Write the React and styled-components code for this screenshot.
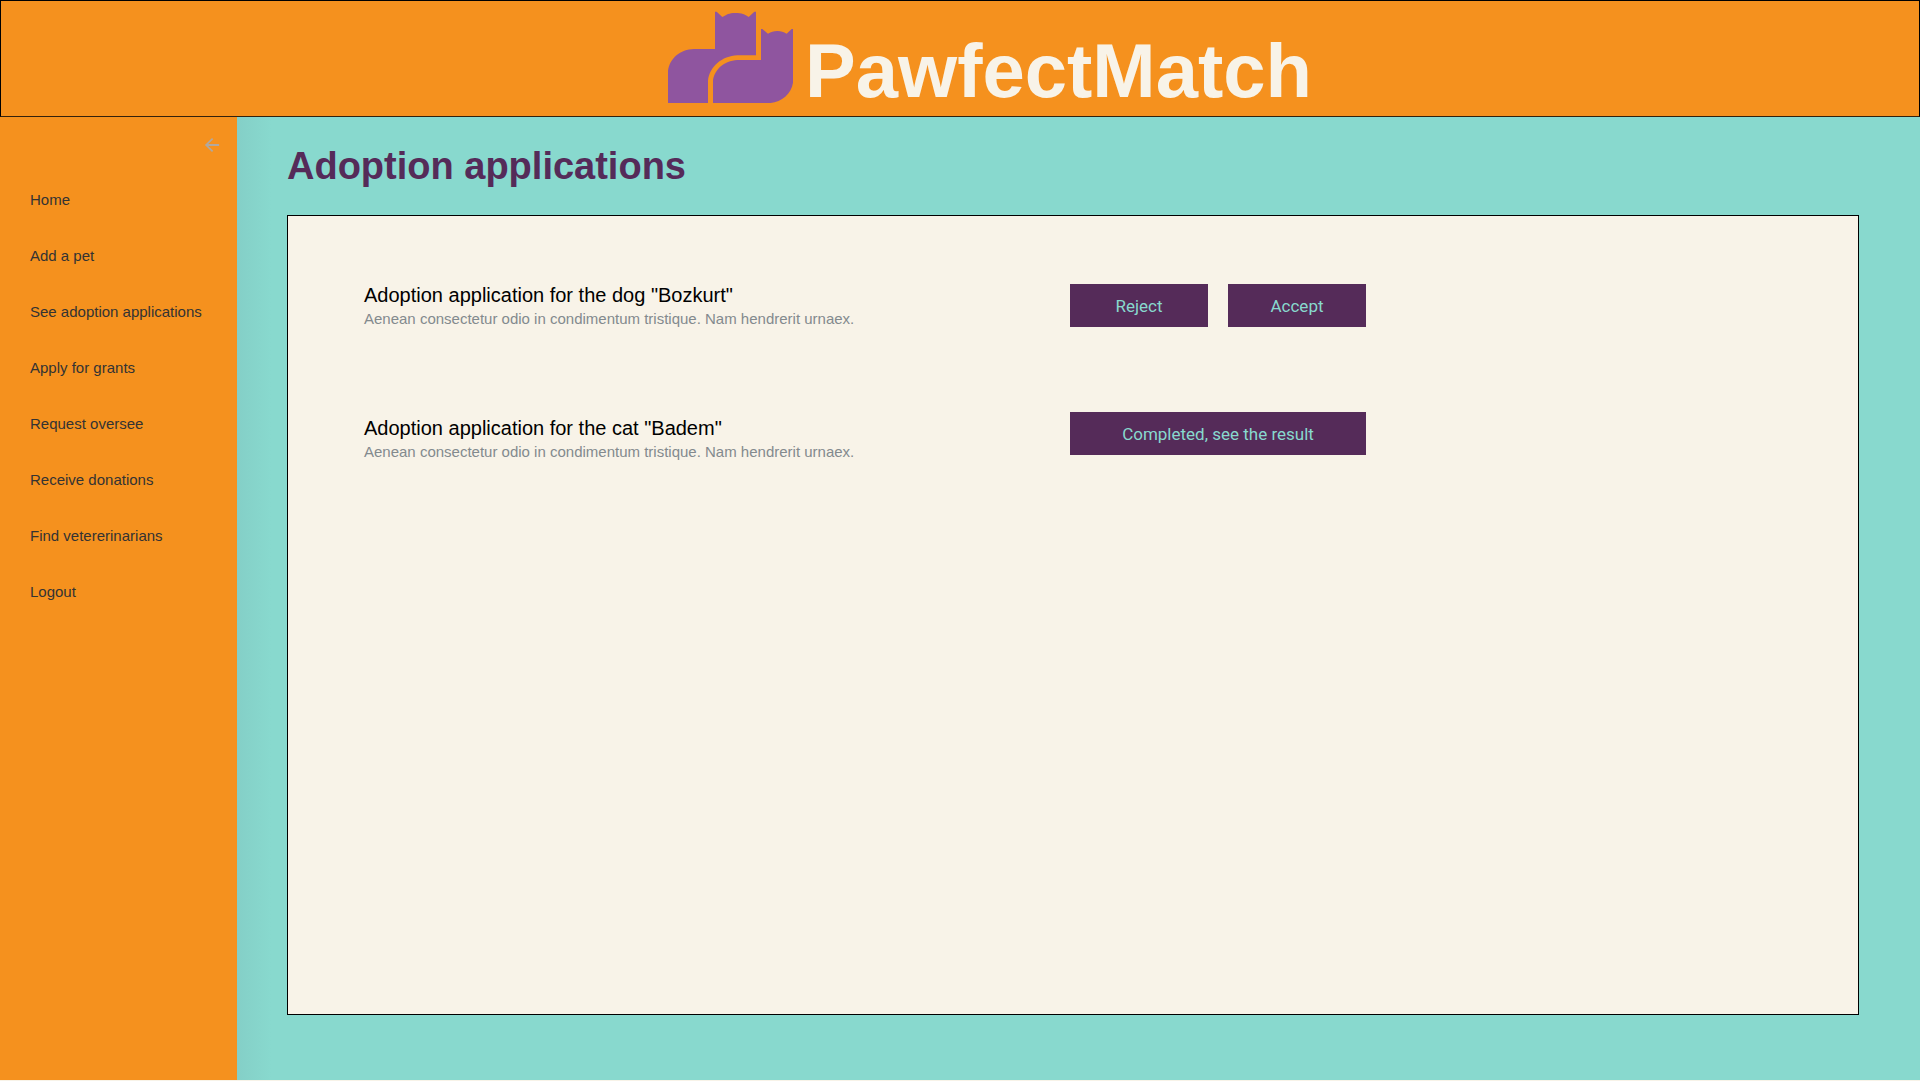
import React from "react";
import styled, { createGlobalStyle } from "styled-components";

const color = {
  orange: "#f5911e",
  teal: "#88d9ce",
  cream: "#f8f3e8",
  plum: "#552b59",
  violet: "#8f559f",
};

const sans = '"Liberation Sans", Arial, sans-serif';
const display = '"Chalkboard SE", "Comic Sans MS", "Liberation Sans", sans-serif';

const GlobalStyle = createGlobalStyle`
  *, *::before, *::after { box-sizing: border-box; }
  body { margin: 0; background: ${color.cream}; font-family: ${sans}; }
  h1, h2, p, ul { margin: 0; padding: 0; }
  ul { list-style: none; }
`;

const Page = styled.div`
  display: flex;
  flex-direction: column;
  min-height: 100vh;
  padding-bottom: 1px;
`;

const Header = styled.header`
  display: flex;
  justify-content: center;
  height: 117px;
  padding: 10px 0 0 60px;
  background: ${color.orange};
  border: 1px solid #000;
  border-bottom-color: #33210c;
`;

const Brand = styled.a`
  display: flex;
  gap: 12px;
  color: ${color.cream};
  text-decoration: none;
`;

const BrandName = styled.span`
  padding-top: 20px;
  font: 700 76px/80px ${display};
`;

const Body = styled.div`
  flex: 1;
  display: flex;
`;

const Sidebar = styled.aside`
  flex: none;
  display: flex;
  flex-direction: column;
  width: 237px;
  padding: 20px 17px 0 30px;
  background: ${color.orange};
`;

const Collapse = styled.button`
  align-self: flex-end;
  display: flex;
  padding: 0;
  border: 0;
  background: none;
  color: #b0a8a0;
  cursor: pointer;
`;

const Menu = styled.ul`
  display: flex;
  flex-direction: column;
  padding-top: 19px;
`;

const MenuLink = styled.a`
  display: block;
  font-size: 15px;
  line-height: 56px;
  color: #333;
  text-decoration: none;
  white-space: nowrap;
`;

const Main = styled.main`
  flex: 1;
  display: flex;
  flex-direction: column;
  padding: 24px 61px 65px 50px;
  background: linear-gradient(90deg, #84cfc7, ${color.teal} 34px);
`;

const Title = styled.h1`
  padding-bottom: 24px;
  font: 700 38px/50px ${display};
  color: ${color.plum};
`;

const Panel = styled.section`
  flex: 1;
  display: grid;
  grid-template-columns: minmax(0, 1fr) 296px;
  align-items: start;
  padding: 68px 492px 0 76px;
  background: ${color.cream};
  border: 1px solid #000;
`;

const Column = styled.ul`
  display: flex;
  flex-direction: column;
  gap: 85px;
`;

const ApplicationTitle = styled.h2`
  font-size: 20px;
  font-weight: 400;
  line-height: 22px;
  color: #000;
`;

const ApplicationText = styled.p`
  font-size: 15px;
  line-height: 26px;
  color: #838a8e;
`;

const Actions = styled.li`
  display: flex;
  gap: 20px;
`;

const Action = styled.button`
  flex: 1;
  height: 43px;
  padding: 0;
  border: 0;
  background: ${color.plum};
  color: ${color.teal};
  font: 400 17px/24px Roboto, sans-serif;
  cursor: pointer;
`;

const links = [
  "Home",
  "Add a pet",
  "See adoption applications",
  "Apply for grants",
  "Request oversee",
  "Receive donations",
  "Find vetererinarians",
  "Logout",
];

const text = "Aenean consectetur odio in condimentum tristique. Nam hendrerit urnaex.";

const applications = [
  { title: 'Adoption application for the dog "Bozkurt"', actions: ["Reject", "Accept"] },
  { title: 'Adoption application for the cat "Badem"', actions: ["Completed, see the result"] },
];

function CatsLogo() {
  return (
    <svg width="125" height="92" viewBox="54 33 375 276" fill={color.violet} aria-hidden="true">
      <path d="M54 309V212C60 175 90 148 132 147H195V35H200L217 51C230 44 236 39 256 39C276 39 284 43 296 51L313 35H318V166H262C216 168 178 200 174 243V309Z" />
      <path d="M189 309V243C192 210 222 182 262 180H333V87H337L354 101C364 96 370 93 382 93C394 93 400 96 410 101L425 87H429V248C424 282 395 305 362 309Z" />
    </svg>
  );
}

function BackArrow() {
  return (
    <svg width="16" height="16" viewBox="3 3 18 18" fill="currentColor" aria-hidden="true">
      <path d="M20 11H7.83l5.59-5.59L12 4l-8 8 8 8 1.41-1.41L7.83 13H20z" />
    </svg>
  );
}

export default function App() {
  return (
    <Page>
      <GlobalStyle />
      <Header>
        <Brand href="#">
          <CatsLogo />
          <BrandName>PawfectMatch</BrandName>
        </Brand>
      </Header>
      <Body>
        <Sidebar>
          <Collapse type="button" aria-label="Collapse menu">
            <BackArrow />
          </Collapse>
          <nav>
            <Menu>
              {links.map((label) => (
                <li key={label}>
                  <MenuLink href="#">{label}</MenuLink>
                </li>
              ))}
            </Menu>
          </nav>
        </Sidebar>
        <Main>
          <Title>Adoption applications</Title>
          <Panel>
            <Column>
              {applications.map(({ title }) => (
                <li key={title}>
                  <ApplicationTitle>{title}</ApplicationTitle>
                  <ApplicationText>{text}</ApplicationText>
                </li>
              ))}
            </Column>
            <Column>
              {applications.map(({ title, actions }) => (
                <Actions key={title}>
                  {actions.map((label) => (
                    <Action key={label} type="button">
                      {label}
                    </Action>
                  ))}
                </Actions>
              ))}
            </Column>
          </Panel>
        </Main>
      </Body>
    </Page>
  );
}
